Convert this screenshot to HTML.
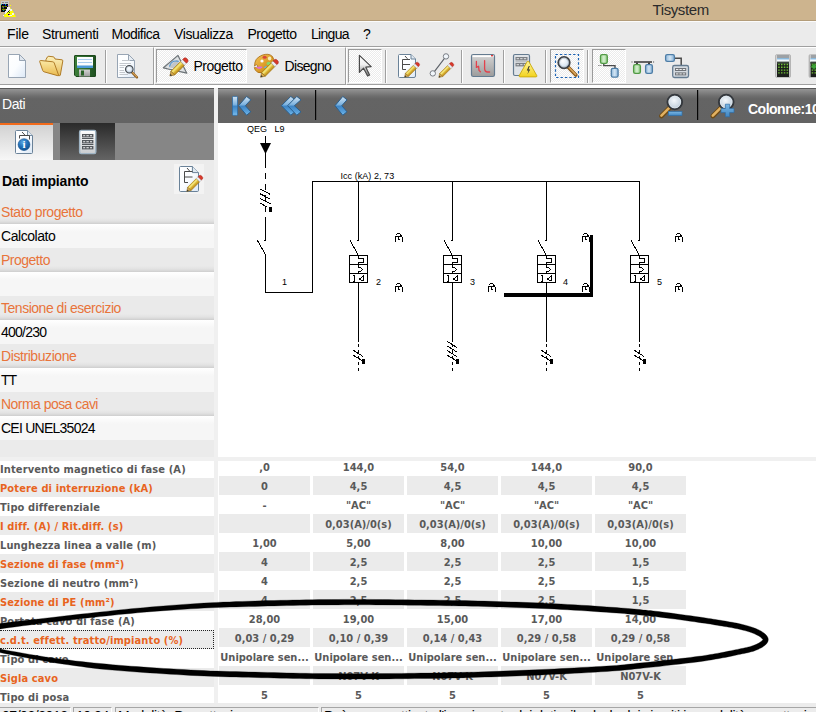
<!DOCTYPE html>
<html lang="it">
<head>
<meta charset="utf-8">
<title>Tisystem</title>
<style>
*{box-sizing:border-box;margin:0;padding:0}
html,body{width:816px;height:712px;overflow:hidden;background:#fff}
body{font-family:"Liberation Sans",sans-serif;font-size:14px;letter-spacing:-0.45px;color:#000;position:relative}
.abs{position:absolute}
#app{position:absolute;left:0;top:0;width:816px;height:712px;overflow:hidden;background:#fff}
/* title bar */
#title{left:0;top:0;width:816px;height:21px;background:#cdb48e;border-bottom:1px solid #b39c79}
#title .cap{left:652.5px;top:0px;letter-spacing:-0.4px;font-size:15px;line-height:19px;color:#2b2b2b;white-space:nowrap}
/* menu */
#menu{left:0;top:21px;width:816px;height:25px;background:#ebebeb;border-top:1px solid #fbfbfb}
#menu span{position:absolute;top:4px;line-height:16px;font-size:14px;white-space:nowrap;color:#000}
/* toolbar */
#tb{left:0;top:46px;width:816px;height:42px;background:#ebebeb;border-top:1px solid #a0a0a0}
#tb .band{position:absolute;top:0;height:38px;border-top:1px solid #fff;border-left:1px solid #fff;border-right:1px solid #a0a0a0;border-bottom:1px solid #a0a0a0}
#tb .under{position:absolute;left:0;top:38px;width:816px;height:3px;background:#fff}
.sep{position:absolute;width:2px;height:33px;border-left:1px solid #a0a0a0;border-right:1px solid #fff}
.btnp{position:absolute;border:1px solid #fff;border-top-color:#9a9a9a;border-left-color:#9a9a9a;background:#f5f5f5 conic-gradient(#ffffff 25%,#ebebeb 0 50%,#ffffff 0 75%,#ebebeb 0) 0 0/2px 2px}
.tbl{position:absolute;font-size:14px;line-height:16px;white-space:nowrap}
/* left panel */
#lhead{left:0;top:88px;width:214px;height:35px;background:linear-gradient(#585858 0,#5a5a5a 1px,#939393 1.2px,#8a8a8a 3px,#6e6e6e 8px,#646464 11px,#636363 100%)}
#lhead span{position:absolute;left:2px;top:8px;font-size:14px;line-height:16px;color:#fff}
#tabs{left:0;top:123px;width:214px;height:37px;background:#868686}
#tab1{left:0;top:0;width:53px;height:37px;background:linear-gradient(#d2d2d2,#f7f7f7);border-top:2px solid #f26a1b}
#tab2{left:60px;top:0;width:55px;height:37px;background:linear-gradient(#2a2a2a,#646464)}
#lbody{left:0;top:160px;width:214px;height:297px;background:#ebebeb}
.lab{position:absolute;left:0;width:214px;height:24px;background:linear-gradient(#eaeaea 0,#eaeaea 18px,#e2e2e2 21px,#d6d6d6 23px,#cdcdcd 24px);color:#e8743b;font-size:14px;line-height:25px;padding-left:1px;white-space:nowrap}
.val{position:absolute;left:0;width:214px;height:24px;background:linear-gradient(#fff 0,#fdfdfd 2px,#f6f6f6 8px,#f6f6f6 100%);color:#000;font-size:14px;line-height:25px;padding-left:1px;white-space:nowrap}
/* splitters */
#vsplit{left:214px;top:88px;width:4px;height:616px;background:#f0f0f0}
#hsplit{left:0;top:457px;width:816px;height:4px;background:#f0f0f0}
/* right panel */
#rhead{left:218px;top:88px;width:598px;height:35px;background:linear-gradient(#585858 0,#5a5a5a 1px,#939393 1.2px,#8a8a8a 3px,#6e6e6e 8px,#646464 11px,#636363 100%)}
#diagram{left:218px;top:123px;width:598px;height:334px;background:#fff}
/* table */
.t{font-family:"DejaVu Sans Condensed","DejaVu Sans","Liberation Sans",sans-serif;font-weight:bold;font-size:11px}
.lr{position:absolute;left:0;width:214px;height:19px;line-height:21px;white-space:nowrap;color:#595959;letter-spacing:0.12px}
.lr.g{background:#ebebeb;color:#e8641e}
.c{position:absolute;width:91px;height:19px;line-height:22px;text-align:center;white-space:nowrap;color:#595959;overflow:hidden;letter-spacing:0}
.c.g{background:#ebebeb}
/* status */
#status{left:0;top:703px;width:816px;height:9px;background:#ececec}
#status div{position:absolute;top:4px;height:20px;border:1px solid #fff;border-top-color:#a6a6a6;border-left-color:#a6a6a6;font-size:14px;line-height:16px;padding-left:2px;white-space:nowrap;overflow:hidden}
.lr.foc{border-top:1px dotted #222;border-bottom:1px dotted #222;border-right:1px dotted #222;line-height:19px}

</style>
</head>
<body>
<div id="app">
<!--TITLE-->
<div id="title" class="abs"><div class="cap abs">Tisystem</div></div>
<svg class="abs" style="left:0;top:0" width="20" height="20" viewBox="0 0 20 20" shape-rendering="crispEdges">
<rect x="1" y="1" width="8" height="4" fill="#c8c8c8"/><path d="M2 2h2v1h-2zM5 2h3v1h-3z" fill="#8a8a8a"/>
<rect x="1" y="4" width="7" height="8" fill="#0a0a0a"/>
<path d="M1 4h1v1h-1zM5 4h1v1h-1z" fill="#00b4b4"/><path d="M3 4h1v1h-1zM5 5h1v1h-1zM7 5h1v1h-1z" fill="#0000c8"/>
<path d="M2 6h5v1h-5zM2 9h4v1h-4z" fill="#808000"/><path d="M2 7h1v1h-1zM3 8h1v1h-1zM4 6h1v1h-1z" fill="#008000"/><path d="M3 7h1v1h-1z" fill="#b000b0"/><path d="M3 10h1v1h-1z" fill="#009090"/>
<path d="M10 5h1v1h-1zM9 7l-6 10h13l-4-8z" fill="#ffff00" shape-rendering="auto"/>
<path d="M7 7h3v2h-3zM6 9h4v2h-4zM5 11h3v2h-3zM10 9h2v2h-2zM5 12h1v2h-1zM12 13h2v2h-2zM3 15h1v1h-1zM9 15h3v1h-3z" fill="#f0f0f4"/>
<path d="M11 8h1v1h-1zM13 10h1v1h-1zM14 12h1v1h-1zM4 13h1v1h-1zM3 16h1v1h-1z" fill="#a8a8c0"/>
<path d="M8 11h1v1h-1zM8 14h1v1h-1z" fill="#0a0a0a"/><path d="M9 12h1v1h-1z" fill="#008000"/><path d="M9 14h1v1h-1z" fill="#a000a0"/><path d="M7 12h1v1h-1zM9 10h1v1h-1z" fill="#808000"/>
</svg>
<!--MENU-->
<div id="menu" class="abs">
<span style="left:7px;letter-spacing:-0.17px">File</span><span style="left:42px;letter-spacing:-0.38px">Strumenti</span><span style="left:111.5px;letter-spacing:-0.5px">Modifica</span><span style="left:174px;letter-spacing:-0.39px">Visualizza</span><span style="left:247.5px;letter-spacing:-0.5px">Progetto</span><span style="left:311px;letter-spacing:-0.7px">Lingua</span><span style="left:363px;letter-spacing:0px">?</span>
</div>
<div id="tb" class="abs">
<div class="band" style="left:0;width:154px;border-left:0"></div>
<div class="band" style="left:154px;width:192px"></div>
<div class="band" style="left:346px;width:470px;border-right:0"></div>
<div class="under"></div>
</div>
<div class="btnp" style="left:156px;top:49px;width:91px;height:34px"></div>
<div class="btnp" style="left:348px;top:49px;width:34px;height:34px"></div>
<div class="btnp" style="left:550px;top:49px;width:34px;height:34px"></div>
<div class="btnp" style="left:592px;top:49px;width:34px;height:34px"></div>
<div class="sep" style="left:105px;top:50px"></div>
<div class="sep" style="left:385px;top:50px"></div>
<div class="sep" style="left:461px;top:50px"></div>
<div class="sep" style="left:503px;top:50px"></div>
<div class="sep" style="left:545px;top:50px"></div>
<div class="sep" style="left:587px;top:50px"></div>
<div class="tbl" style="left:193.5px;top:58px;letter-spacing:-0.5px">Progetto</div>
<div class="tbl" style="left:284.5px;top:58px;letter-spacing:-0.67px">Disegno</div>
<svg class="abs" style="left:0;top:46px" width="816" height="42" viewBox="0 46 816 42">
<defs>
<linearGradient id="gPage" x1="0" y1="0" x2="1" y2="1"><stop offset="0" stop-color="#ffffff"/><stop offset="0.5" stop-color="#fbfdff"/><stop offset="1" stop-color="#dce8f6"/></linearGradient>
<linearGradient id="gFold" x1="0" y1="0" x2="0" y2="1"><stop offset="0" stop-color="#fbe9a6"/><stop offset="1" stop-color="#e9b94e"/></linearGradient>
<linearGradient id="gFoldB" x1="0" y1="0" x2="0" y2="1"><stop offset="0" stop-color="#fdf2bd"/><stop offset="1" stop-color="#e6bb58"/></linearGradient>
<linearGradient id="gPen" x1="0" y1="0" x2="0" y2="1"><stop offset="0" stop-color="#e6cc48"/><stop offset="0.3" stop-color="#f4e680"/><stop offset="0.6" stop-color="#dcb634"/><stop offset="1" stop-color="#b8861c"/></linearGradient>
<linearGradient id="gGray" x1="0" y1="0" x2="0" y2="1"><stop offset="0" stop-color="#d4d4d4"/><stop offset="1" stop-color="#9c9c9c"/></linearGradient>
<linearGradient id="gCur" x1="0" y1="0" x2="0" y2="1"><stop offset="0" stop-color="#ffffff"/><stop offset="0.45" stop-color="#f0f0f0"/><stop offset="1" stop-color="#7a7a7a"/></linearGradient>
<linearGradient id="gGreen" x1="0" y1="0" x2="1" y2="0"><stop offset="0" stop-color="#93d088"/><stop offset="0.5" stop-color="#d8f0d2"/><stop offset="1" stop-color="#8aca7e"/></linearGradient>
<linearGradient id="gBlue" x1="0" y1="0" x2="1" y2="0"><stop offset="0" stop-color="#90b8db"/><stop offset="0.5" stop-color="#d2e5f4"/><stop offset="1" stop-color="#86b0d6"/></linearGradient>
<linearGradient id="gWarn" x1="0" y1="0" x2="0" y2="1"><stop offset="0" stop-color="#fff59a"/><stop offset="1" stop-color="#f2d21c"/></linearGradient>
<radialGradient id="gLens" cx="0.4" cy="0.35" r="0.7"><stop offset="0" stop-color="#ffffff"/><stop offset="0.6" stop-color="#dfeaf5"/><stop offset="1" stop-color="#b4c8dc"/></radialGradient>
<linearGradient id="gPal" x1="0" y1="0" x2="1" y2="1"><stop offset="0" stop-color="#f3c55a"/><stop offset="0.5" stop-color="#dfa02c"/><stop offset="1" stop-color="#b87613"/></linearGradient>
<linearGradient id="gCalc" x1="0" y1="0" x2="1" y2="0"><stop offset="0" stop-color="#9a9a9a"/><stop offset="0.12" stop-color="#ffffff"/><stop offset="0.88" stop-color="#f4f4f4"/><stop offset="1" stop-color="#8a8a8a"/></linearGradient>
<linearGradient id="gFl" x1="0" y1="0" x2="1" y2="0"><stop offset="0" stop-color="#3d7f3a"/><stop offset="0.5" stop-color="#2f6d2e"/><stop offset="1" stop-color="#1f4f20"/></linearGradient>


</defs>
<path d="M8.5 54.5H19.5L25.5 60.5V77.5H8.5Z" fill="url(#gPage)" stroke="#98a5b4" stroke-width="1"/>
<path d="M19.5 54.5V60.5H25.5Z" fill="#dfe6ee" stroke="#98a5b4" stroke-width="1" stroke-linejoin="round"/>
<path d="M46 59.5L47.5 56.8Q48 56.2 49 56.3L53.2 56.8Q54.2 57 54.6 58L55 59L62 59.8Q63 60 62.8 61L60.3 75.2Q60 76 59 75.6L45 71Z" fill="url(#gFoldB)" stroke="#b07c28" stroke-width="1" stroke-linejoin="round"/>
<path d="M39.7 61.6Q39.5 60.5 40.6 60.5L52.8 61.8Q53.8 61.9 54.2 62.9L58.6 75.2Q58.8 76 57.8 75.7L44 71.8Q43 71.5 42.7 70.5Z" fill="url(#gFold)" stroke="#b07c28" stroke-width="1" stroke-linejoin="round"/>
<path d="M74.5 56Q74.5 55.5 75 55.5H95Q95.5 55.5 95.5 56V76Q95.5 76.5 95 76.5H76L74.5 75Z" fill="url(#gFl)" stroke="#1d4a1d" stroke-width="1"/>
<rect x="77" y="57" width="16" height="11" fill="#fbfdff"/>
<rect x="77" y="65.5" width="16" height="2.5" fill="#4d9ad8"/>
<path d="M78 59.5H92M78 62.5H92" stroke="#a9cdee" stroke-width="1"/>
<rect x="79" y="69.5" width="11" height="7" fill="url(#gGray)"/>
<rect x="81" y="70.5" width="3" height="5" fill="#2a6428"/>
<path d="M117.5 54.5H128.5L134.5 60.5V77.5H117.5Z" fill="url(#gPage)" stroke="#98a5b4" stroke-width="1"/>
<path d="M128.5 54.5V60.5H134.5Z" fill="#e7edf3" stroke="#98a5b4" stroke-width="1" stroke-linejoin="round"/>
<path d="M122 60.5H130M119.5 63.5H131M119.5 65.5H126M119.5 67.5H124M119.5 70.5H124M119.5 72.5H125M119.5 74.5H128" stroke="#c4c8cd" stroke-width="1"/>
<g transform="translate(129.3 69.3) scale(0.66)">
 <path d="M4.2 4.6L11.6 12.2" stroke="#8a5a1c" stroke-width="3.6" stroke-linecap="round" fill="none"/>
 <path d="M4.6 4.6L11.4 11.6" stroke="#d9a45a" stroke-width="1.6" stroke-linecap="round" fill="none"/>
 <circle cx="0" cy="0" r="5.6" fill="url(#gLens)" stroke="#3f4348" stroke-width="1.9"/>
 <circle cx="0" cy="0" r="4.4" fill="none" stroke="#aeb9c4" stroke-width="0.8"/>
</g>
<path d="M163.4 67.8L178 55.4L186.8 73.2Z" fill="#d9dcde" stroke="#6d7478" stroke-width="1.2" stroke-linejoin="round"/>
<path d="M167 67.6L177.4 58.6L182.6 70.4Z" fill="#c1c5c8" stroke="#eef0f1" stroke-width="0.8"/>
<path d="M169.5 66.5Q171.5 59.5 178.8 61.4" fill="none" stroke="#4f93cf" stroke-width="1.1"/>
<g transform="translate(169.9 76) scale(1.02)"><g transform="rotate(-45)">
 <path d="M4 -2.6H17.6V2.6H4Z" fill="url(#gPen)" stroke="#a8780e" stroke-width="0.7"/>
 <path d="M0 0L4 -2.6V2.6Z" fill="#d8aa4a" stroke="#8c6a22" stroke-width="0.6" stroke-linejoin="round"/>
 <path d="M0 0L1.9 -1.25V1.25Z" fill="#3c3c3c"/>
 <path d="M17.6 -2.6H20.4V2.6H17.6Z" fill="#eceef2" stroke="#a4a8b0" stroke-width="0.5"/>
 <path d="M20.4 -2.6H22.2Q23.8 -2.4 23.8 0Q23.8 2.4 22.2 2.6H20.4Z" fill="#d8382a" stroke="#a3261c" stroke-width="0.5"/>
</g></g>
<path d="M254.6 66.2Q254.2 58.2 262 55.2Q268.6 52.8 272.4 56.4Q275 59.4 272.8 63.6Q270.6 67.6 267 70.8Q262.4 74 258 72.4Q254.6 70.6 254.3 67.6Q256.6 68.2 257.6 66.9Q258.2 65.6 256.8 64.8Q255.2 64.6 254.6 66.2Z" fill="url(#gPal)" stroke="#a86a10" stroke-width="0.8"/>
<ellipse cx="264.6" cy="57.3" rx="2" ry="1.5" fill="#d8453a"/>
<ellipse cx="269.6" cy="58.4" rx="1.7" ry="2" fill="#f6e9b0"/>
<ellipse cx="262" cy="61" rx="1.6" ry="1.5" fill="#fafafa"/>
<ellipse cx="268.6" cy="63.4" rx="2" ry="1.6" fill="#86d66c"/>
<path d="M256.6 67.4Q259.4 69.8 262.2 67.2Q260 66.6 258.6 67.2Z" fill="#e06ad8" stroke="#e06ad8" stroke-width="1"/>
<path d="M263.6 67.6L267 65.4L266 68.4Z" fill="#58b4ea"/>
<g transform="translate(260.6 77.2) scale(1.0)"><g transform="rotate(-45)">
 <path d="M4 -2.6H17.6V2.6H4Z" fill="url(#gPen)" stroke="#a8780e" stroke-width="0.7"/>
 <path d="M0 0L4 -2.6V2.6Z" fill="#d8aa4a" stroke="#8c6a22" stroke-width="0.6" stroke-linejoin="round"/>
 <path d="M0 0L1.9 -1.25V1.25Z" fill="#3c3c3c"/>
 <path d="M17.6 -2.6H20.4V2.6H17.6Z" fill="#eceef2" stroke="#a4a8b0" stroke-width="0.5"/>
 <path d="M20.4 -2.6H22.2Q23.8 -2.4 23.8 0Q23.8 2.4 22.2 2.6H20.4Z" fill="#d8382a" stroke="#a3261c" stroke-width="0.5"/>
</g></g>
<path d="M359.4 55.4V72.4L363.6 68.2L367.6 76L369.6 75L365.8 67.2L371.2 66.6Z" fill="url(#gCur)" stroke="#4a4a4a" stroke-width="1.2" stroke-linejoin="round"/>
<path d="M399.5 54.5H411L415.5 59V76Q415.5 77.5 414 77.5H399.5Q398.5 77.5 398.5 76.5V55.5Q398.5 54.5 399.5 54.5Z" fill="url(#gPage)" stroke="#6a8298" stroke-width="1"/>
<path d="M411 54.5V59H415.5" fill="#dfe8f1" stroke="#6a8298" stroke-width="1"/>
<path d="M402.5 69.5V59.5H410M402.5 64.5H410M402.5 69.5H406M405 56L407.5 58.8" fill="none" stroke="#4a4a4a" stroke-width="1"/>
<g transform="translate(404.6 77.2) scale(0.84)"><g transform="rotate(-45)">
 <path d="M4 -2.6H17.6V2.6H4Z" fill="url(#gPen)" stroke="#a8780e" stroke-width="0.7"/>
 <path d="M0 0L4 -2.6V2.6Z" fill="#d8aa4a" stroke="#8c6a22" stroke-width="0.6" stroke-linejoin="round"/>
 <path d="M0 0L1.9 -1.25V1.25Z" fill="#3c3c3c"/>
 <path d="M17.6 -2.6H20.4V2.6H17.6Z" fill="#eceef2" stroke="#a4a8b0" stroke-width="0.5"/>
 <path d="M20.4 -2.6H22.2Q23.8 -2.4 23.8 0Q23.8 2.4 22.2 2.6H20.4Z" fill="#d8382a" stroke="#a3261c" stroke-width="0.5"/>
</g></g>
<path d="M433 73.4L446 56.4" stroke="#5a5f66" stroke-width="1.1"/>
<circle cx="446" cy="56.4" r="2.7" fill="#f1f6fb" stroke="#6c7178" stroke-width="0.9"/>
<circle cx="432.8" cy="73.4" r="2.7" fill="#f1f6fb" stroke="#6c7178" stroke-width="0.9"/>
<g transform="translate(438.8 77.4) scale(0.84)"><g transform="rotate(-45)">
 <path d="M4 -2.6H17.6V2.6H4Z" fill="url(#gPen)" stroke="#a8780e" stroke-width="0.7"/>
 <path d="M0 0L4 -2.6V2.6Z" fill="#d8aa4a" stroke="#8c6a22" stroke-width="0.6" stroke-linejoin="round"/>
 <path d="M0 0L1.9 -1.25V1.25Z" fill="#3c3c3c"/>
 <path d="M17.6 -2.6H20.4V2.6H17.6Z" fill="#eceef2" stroke="#a4a8b0" stroke-width="0.5"/>
 <path d="M20.4 -2.6H22.2Q23.8 -2.4 23.8 0Q23.8 2.4 22.2 2.6H20.4Z" fill="#d8382a" stroke="#a3261c" stroke-width="0.5"/>
</g></g>
<rect x="471.5" y="54.5" width="23" height="22" rx="1.8" fill="url(#gGray)" stroke="#647b90" stroke-width="1.2"/>
<rect x="472.5" y="55.3" width="21" height="1.8" fill="#fdfdfd"/>
<rect x="491" y="55" width="2" height="1.4" fill="#e03c3c"/>
<path d="M476.4 61.4V67.4L478.6 66.2L479 70.4L480.4 71.8M484.6 60.6V68.6Q484.8 72 487.6 72H489.6" fill="none" stroke="#e2414c" stroke-width="1.3" stroke-linecap="round" stroke-linejoin="round"/>
<rect x="513.5" y="54.5" width="16" height="21" rx="1.5" fill="#dfe3e7" stroke="#647b90" stroke-width="1.2"/>
<rect x="515.5" y="57" width="12" height="3.4" fill="#7b7f84"/><rect x="515.5" y="63" width="12" height="3.4" fill="#7b7f84"/>
<path d="M516.6 58.7h2.4m1.2 0h2.4m1.2 0h2.4M516.6 64.7h2.4m1.2 0h2.4m1.2 0h2.4" stroke="#e6e6e6" stroke-width="1"/>
<path d="M515.5 61.8H527.5" stroke="#8d9196" stroke-width="0.6"/>
<path d="M527.2 61.6Q528 60.6 528.8 61.6L536.8 75.6Q537.2 76.8 536 76.9H520Q518.8 76.8 519.2 75.6Z" fill="url(#gWarn)" stroke="#c9a80c" stroke-width="0.9" stroke-linejoin="round"/>
<path d="M528.8 66L526.8 70.4H528.6L527.4 74.2L530.2 69.4H528.4L529.8 66Z" fill="#2c2c2c"/>
<rect x="555.5" y="54.5" width="23" height="23" fill="none" stroke="#1d63b3" stroke-width="1.2" stroke-dasharray="2.4 2"/>
<g transform="translate(564 62.6) scale(1.02)">
 <path d="M4.2 4.6L11.6 12.2" stroke="#8a5a1c" stroke-width="3.6" stroke-linecap="round" fill="none"/>
 <path d="M4.6 4.6L11.4 11.6" stroke="#d9a45a" stroke-width="1.6" stroke-linecap="round" fill="none"/>
 <circle cx="0" cy="0" r="5.6" fill="url(#gLens)" stroke="#3f4348" stroke-width="1.9"/>
 <circle cx="0" cy="0" r="4.4" fill="none" stroke="#aeb9c4" stroke-width="0.8"/>
</g>
<path d="M598.4 65.5h1m1 0h1" stroke="#555" stroke-width="1"/>
<path d="M603.8 63.5V65.6H615V68" fill="none" stroke="#4a4a4a" stroke-width="1.4"/>
<rect x="600.5" y="54.6" width="6.8" height="8.8" rx="1.6" fill="url(#gGreen)" stroke="#519a44" stroke-width="1.3"/>
<rect x="611.3" y="68.3" width="6.8" height="8.8" rx="1.6" fill="url(#gBlue)" stroke="#4d7da6" stroke-width="1.3"/>
<path d="M632 61.3v1.4M653.6 61.3v1.4" stroke="#555" stroke-width="0.8"/>
<path d="M634 62H652" stroke="#3f3f3f" stroke-width="1.6"/>
<path d="M637 62.5V64.5M649 62.5V64.5" stroke="#3f3f3f" stroke-width="2"/>
<rect x="633.6" y="64.6" width="6.8" height="8.8" rx="1.6" fill="url(#gGreen)" stroke="#519a44" stroke-width="1.3"/>
<rect x="645.6" y="64.6" width="6.8" height="8.8" rx="1.6" fill="url(#gBlue)" stroke="#4d7da6" stroke-width="1.3"/>
<path d="M675 58.2H681.2V65.4" fill="none" stroke="#4a4a4a" stroke-width="1.5"/>
<rect x="665.6" y="54.6" width="8.8" height="6.8" rx="1.6" fill="url(#gBlue)" stroke="#4d7da6" stroke-width="1.3"/>
<rect x="672.7" y="65.5" width="15.8" height="12" rx="1.8" fill="#d5dbe1" stroke="#647b90" stroke-width="1.3"/>
<rect x="675" y="68" width="11.2" height="3" fill="#6f7378"/><rect x="675" y="72.4" width="11.2" height="3" fill="#6f7378"/>
<path d="M676 69.5h2.4m1 0h2.4m1 0h2.4M676 73.9h2.4m1 0h2.4m1 0h2.4" stroke="#ededed" stroke-width="1"/>
<rect x="775.5" y="54.5" width="15" height="23" rx="1.5" fill="url(#gCalc)" stroke="#b4b4b4" stroke-width="0.8"/>
<rect x="777" y="55" width="12" height="3.4" fill="#9da1a5"/>
<rect x="777" y="58.4" width="12" height="1.2" fill="#5aa5dc"/>
<rect x="777" y="59.6" width="12" height="2.2" fill="#f4f9fd"/>
<rect x="777" y="61.8" width="12" height="15.2" fill="#1c1f1c"/>
<rect x="777" y="61.8" width="12" height="2" fill="#3b453b"/>
<path d="M778.2 63.8h1.5v1.4h-1.5zM781.0 63.8h1.5v1.4h-1.5zM783.8000000000001 63.8h1.5v1.4h-1.5zM786.6 63.8h1.5v1.4h-1.5zM778.2 66.6h1.5v1.4h-1.5zM781.0 66.6h1.5v1.4h-1.5zM783.8000000000001 66.6h1.5v1.4h-1.5zM786.6 66.6h1.5v1.4h-1.5zM778.2 69.39999999999999h1.5v1.4h-1.5zM781.0 69.39999999999999h1.5v1.4h-1.5zM783.8000000000001 69.39999999999999h1.5v1.4h-1.5zM786.6 69.39999999999999h1.5v1.4h-1.5zM778.2 72.19999999999999h1.5v1.4h-1.5zM781.0 72.19999999999999h1.5v1.4h-1.5zM783.8000000000001 72.19999999999999h1.5v1.4h-1.5zM786.6 72.19999999999999h1.5v1.4h-1.5z" fill="#6fbf35"/>
<rect x="809.0" y="54.5" width="15" height="23" rx="1.5" fill="url(#gCalc)" stroke="#b4b4b4" stroke-width="0.8"/>
<rect x="810.5" y="55" width="12" height="3.4" fill="#9da1a5"/>
<rect x="810.5" y="58.4" width="12" height="1.2" fill="#5aa5dc"/>
<rect x="810.5" y="59.6" width="12" height="2.2" fill="#f4f9fd"/>
<rect x="810.5" y="61.8" width="12" height="15.2" fill="#1c1f1c"/>
<rect x="810.5" y="61.8" width="12" height="2" fill="#3b453b"/>
<path d="M811.7 63.8h1.5v1.4h-1.5zM814.5 63.8h1.5v1.4h-1.5zM817.3000000000001 63.8h1.5v1.4h-1.5zM820.1 63.8h1.5v1.4h-1.5zM811.7 66.6h1.5v1.4h-1.5zM814.5 66.6h1.5v1.4h-1.5zM817.3000000000001 66.6h1.5v1.4h-1.5zM820.1 66.6h1.5v1.4h-1.5zM811.7 69.39999999999999h1.5v1.4h-1.5zM814.5 69.39999999999999h1.5v1.4h-1.5zM817.3000000000001 69.39999999999999h1.5v1.4h-1.5zM820.1 69.39999999999999h1.5v1.4h-1.5zM811.7 72.19999999999999h1.5v1.4h-1.5zM814.5 72.19999999999999h1.5v1.4h-1.5zM817.3000000000001 72.19999999999999h1.5v1.4h-1.5zM820.1 72.19999999999999h1.5v1.4h-1.5z" fill="#6fbf35"/>
<path d="M811 66.5L814 63.5L817 66.5L814 69.5Z" fill="#3ea338" stroke="#2b7a27" stroke-width="0.8"/>
</svg>
<!--LEFT-->
<div id="lhead" class="abs"><span>Dati</span></div>
<div id="tabs" class="abs"><div id="tab1" class="abs"></div><div id="tab2" class="abs"></div></div>
<div id="lbody" class="abs"></div>
<div class="lab" style="top:200px;letter-spacing:-0.46px">Stato progetto</div>
<div class="val" style="top:224px;letter-spacing:-0.44px">Calcolato</div>
<div class="lab" style="top:248px;letter-spacing:-0.5px">Progetto</div>
<div class="val" style="top:272px;letter-spacing:-0.45px"></div>
<div class="lab" style="top:296px;letter-spacing:-0.48px">Tensione di esercizio</div>
<div class="val" style="top:320px;letter-spacing:-0.75px">400/230</div>
<div class="lab" style="top:344px;letter-spacing:-0.42px">Distribuzione</div>
<div class="val" style="top:368px;letter-spacing:-1px">TT</div>
<div class="lab" style="top:392px;letter-spacing:-0.54px">Norma posa cavi</div>
<div class="val" style="top:416px;letter-spacing:-0.75px">CEI UNEL35024</div>
<div class="abs" style="left:2px;top:171.5px;font-weight:bold;font-size:14px;line-height:18px;white-space:nowrap;letter-spacing:-0.17px">Dati impianto</div>
<div class="abs" style="left:174px;top:164px;width:30px;height:30px;background:#f3f3f3"></div>
<svg class="abs" style="left:0;top:123px" width="214" height="75" viewBox="0 123 214 75">
<defs>
<linearGradient id="lPage" x1="0" y1="0" x2="1" y2="1"><stop offset="0" stop-color="#ffffff"/><stop offset="0.5" stop-color="#fafcff"/><stop offset="1" stop-color="#dbe8f6"/></linearGradient>
<radialGradient id="lInfo" cx="0.4" cy="0.3" r="0.8"><stop offset="0" stop-color="#5aa5e0"/><stop offset="0.5" stop-color="#1f6fb8"/><stop offset="1" stop-color="#0d4a86"/></radialGradient>
<linearGradient id="lSrv" x1="0" y1="0" x2="0" y2="1"><stop offset="0" stop-color="#ffffff"/><stop offset="1" stop-color="#c9cccf"/></linearGradient>
<linearGradient id="lPen" x1="0" y1="0" x2="0" y2="1"><stop offset="0" stop-color="#e6cc48"/><stop offset="0.3" stop-color="#f4e680"/><stop offset="0.6" stop-color="#dcb634"/><stop offset="1" stop-color="#b8861c"/></linearGradient>

</defs>
<path d="M16.5 130.5H27.5L32.5 135.5V152.5Q32.5 153.5 31.5 153.5H16.5Q15.5 153.5 15.5 152.5V131.5Q15.5 130.5 16.5 130.5Z" fill="url(#lPage)" stroke="#6a8298" stroke-width="1"/>
<path d="M27.5 130.5V135.5H32.5" fill="#e4ebf3" stroke="#6a8298" stroke-width="0.9"/>
<path d="M19.5 138.5V135.5H29.5V139.5M22 132L25 135.2" fill="none" stroke="#4a4a4a" stroke-width="1"/>
<circle cx="24" cy="144.6" r="5.9" fill="url(#lInfo)" stroke="#0d4a86" stroke-width="0.6"/>
<text x="24.1" y="148.4" font-family="Liberation Serif, serif" font-weight="bold" font-size="11px" fill="#fff" text-anchor="middle" style="letter-spacing:0">i</text>
<rect x="79.6" y="130.4" width="16.2" height="23.2" rx="1.6" fill="url(#lSrv)" stroke="#9fb4c4" stroke-width="1.4"/>
<rect x="82" y="134" width="11.4" height="3.4" fill="#55595d"/>
<path d="M83.2 135.7h2m1.2 0h2.4m1.2 0h2" stroke="#f4f4f4" stroke-width="1.1"/>
<rect x="82" y="140" width="11.4" height="3.4" fill="#55595d"/>
<path d="M83.2 141.7h2m1.2 0h2.4m1.2 0h2" stroke="#f4f4f4" stroke-width="1.1"/>
<rect x="82" y="146" width="11.4" height="3.4" fill="#55595d"/>
<path d="M83.2 147.7h2m1.2 0h2.4m1.2 0h2" stroke="#f4f4f4" stroke-width="1.1"/>
<path d="M82 138.5h11.4M82 144.5h11.4" stroke="#44484c" stroke-width="0.9"/>
<path d="M180.6 166.5H192.4L198.5 172.6V190.4Q198.5 191.5 197.4 191.5H180.6Q179.5 191.5 179.5 190.4V167.6Q179.5 166.5 180.6 166.5Z" fill="url(#lPage)" stroke="#6a8298" stroke-width="1"/>
<path d="M192.4 166.5V172.6H198.5" fill="#dfe8f1" stroke="#6a8298" stroke-width="1"/>
<path d="M184.5 182.5V171.5H192.5M184.5 177H192.5M184.5 182.5H188M187 168L189.6 171" fill="none" stroke="#4a4a4a" stroke-width="1"/>
<g transform="translate(186.8 191.4) scale(0.9)"><g transform="rotate(-45)">
 <path d="M4 -2.6H17.6V2.6H4Z" fill="url(#lPen)" stroke="#a8780e" stroke-width="0.7"/>
 <path d="M0 0L4 -2.6V2.6Z" fill="#d8aa4a" stroke="#8c6a22" stroke-width="0.6" stroke-linejoin="round"/>
 <path d="M0 0L1.9 -1.25V1.25Z" fill="#3c3c3c"/>
 <path d="M17.6 -2.6H20.4V2.6H17.6Z" fill="#eceef2" stroke="#a4a8b0" stroke-width="0.5"/>
 <path d="M20.4 -2.6H22.2Q23.8 -2.4 23.8 0Q23.8 2.4 22.2 2.6H20.4Z" fill="#d8382a" stroke="#a3261c" stroke-width="0.5"/>
</g></g>
</svg>
<!--RIGHT-->
<div id="rhead" class="abs"></div>
<svg class="abs" style="left:218px;top:88px" width="598" height="35" viewBox="218 88 598 35">
<defs>
<linearGradient id="hChev" gradientUnits="userSpaceOnUse" x1="0" y1="96" x2="0" y2="116"><stop offset="0" stop-color="#d6e6f3"/><stop offset="0.42" stop-color="#7fb4e0"/><stop offset="0.52" stop-color="#3f86c6"/><stop offset="0.8" stop-color="#5aa2dc"/><stop offset="1" stop-color="#86c4f0"/></linearGradient>
<radialGradient id="hLens" cx="0.45" cy="0.4" r="0.7"><stop offset="0" stop-color="#f4f8fb"/><stop offset="0.6" stop-color="#ccd8e2"/><stop offset="1" stop-color="#93a7b8"/></radialGradient>
<linearGradient id="hBlue" x1="0" y1="0" x2="0" y2="1"><stop offset="0" stop-color="#7bb6e2"/><stop offset="1" stop-color="#3f86c3"/></linearGradient>

</defs>
<rect x="232.5" y="96.4" width="5" height="19" rx="0.8" fill="url(#hChev)" stroke="#2f6fa8" stroke-width="0.8"/>
<path d="M238.6 105.7L246.6 96.4L250.79999999999998 99.80000000000001L245.39999999999998 105.7L250.79999999999998 111.8L246.6 115.2Z" fill="url(#hChev)" stroke="#2a5f8e" stroke-width="1" stroke-linejoin="round"/>
<path d="M281.4 105.7L290.8 96.4L295.0 99.80000000000001L288.2 105.7L295.0 111.8L290.8 115.2Z" fill="url(#hChev)" stroke="#2a5f8e" stroke-width="1" stroke-linejoin="round"/>
<path d="M287.6 105.7L296.8 96.4L301.0 99.80000000000001L294.40000000000003 105.7L301.0 111.8L296.8 115.2Z" fill="url(#hChev)" stroke="#2a5f8e" stroke-width="1" stroke-linejoin="round"/>
<path d="M335 105.7L342.8 96.4L347 99.80000000000001L341.8 105.7L347 111.8L342.8 115.2Z" fill="url(#hChev)" stroke="#2a5f8e" stroke-width="1" stroke-linejoin="round"/>
<rect x="265" y="90" width="1.2" height="30" fill="#050505"/>
<rect x="315" y="90" width="1.2" height="30" fill="#050505"/>
<rect x="697" y="90" width="1.2" height="30" fill="#050505"/>
<g transform="translate(674.8 102)">
 <path d="M-5.4 6L-13.4 14" stroke="#6e4a14" stroke-width="4.6" stroke-linecap="round" fill="none"/>
 <path d="M-5.6 5.8L-13.4 13.6" stroke="#e2b162" stroke-width="2.6" stroke-linecap="round" fill="none"/>
 <circle cx="0" cy="0" r="7.3" fill="url(#hLens)" stroke="#34383d" stroke-width="2"/>
 <circle cx="0" cy="0" r="5.9" fill="none" stroke="#e8eef3" stroke-width="0.8" opacity="0.8"/>
</g>
<rect x="668.4" y="111.6" width="13.6" height="4" fill="url(#hBlue)" stroke="#2f6fa8" stroke-width="0.7"/>
<g transform="translate(726.2 102)">
 <path d="M-5.4 6L-13.4 14" stroke="#6e4a14" stroke-width="4.6" stroke-linecap="round" fill="none"/>
 <path d="M-5.6 5.8L-13.4 13.6" stroke="#e2b162" stroke-width="2.6" stroke-linecap="round" fill="none"/>
 <circle cx="0" cy="0" r="7.3" fill="url(#hLens)" stroke="#34383d" stroke-width="2"/>
 <circle cx="0" cy="0" r="5.9" fill="none" stroke="#e8eef3" stroke-width="0.8" opacity="0.8"/>
</g>
<path d="M725.4 104.2h4.2v4.2h4.4v4.2h-4.4v4.2h-4.2v-4.2h-4.4v-4.2h4.4z" fill="url(#hBlue)" stroke="#2f6fa8" stroke-width="0.7"/>
</svg>
<div class="abs" style="left:748px;top:100.5px;color:#fff;font-weight:bold;font-size:14px;line-height:16px;white-space:nowrap;letter-spacing:-0.5px">Colonne:10</div>
<div id="diagram" class="abs"></div>
<svg class="abs" style="left:0;top:0" width="816" height="712" viewBox="0 0 816 712">
<g fill="none" stroke="#000" stroke-width="1" shape-rendering="crispEdges">
<path d="M265.5 136V168"/>
<path d="M265.5 173V179"/>
<path d="M265.5 184V190"/>
<path d="M265.5 195V201"/>
<path d="M265.5 206V212"/>
<path d="M265.5 217V241"/>
<rect x="264" y="240" width="1" height="1" fill="#000" stroke="none"/>
<path d="M257.5 240.5L265.5 254.5" shape-rendering="crispEdges" stroke-width="1"/>
<path d="M265.5 254V293"/>
<path d="M265 292.5H313"/>
<path d="M312.5 181V293"/>
<path d="M260 189L270.5 194.5" shape-rendering="crispEdges" stroke-width="1"/>
<path d="M260 193.7L270.5 199.2" shape-rendering="crispEdges" stroke-width="1"/>
<path d="M260 198.4L270.5 203.9" shape-rendering="crispEdges" stroke-width="1"/>
<path d="M260 203L267 207" shape-rendering="crispEdges" stroke-width="1"/>
<rect x="269" y="207" width="3" height="5" fill="#000" stroke="none"/>
<path d="M312 181.5H640"/>
<path d="M358.5 181V241"/>
<rect x="357" y="240" width="1" height="1" fill="#000" stroke="none"/>
<path d="M350 240.5L358.5 255.5" shape-rendering="crispEdges" stroke-width="1"/>
<rect x="349.5" y="255.5" width="18" height="27"/>
<path d="M349 264.5H368"/>
<path d="M349 273.5H368"/>
<path d="M358.5 256V258.5H363.5V262.5H358.5V264"/>
<path d="M358.5 265V267.5H360.5L362.5 269.5L360.5 271.5H358.5V273" />
<path d="M354.5 275V282"/>
<rect x="353" y="275" width="1" height="1" fill="#000" stroke="none"/>
<rect x="353" y="281" width="1" height="1" fill="#000" stroke="none"/>
<path d="M363.5 275V281"/>
<rect x="359" y="278" width="2" height="2" fill="#000" stroke="none"/>
<rect x="361" y="277" width="1" height="1" fill="#000" stroke="none"/>
<rect x="361" y="280" width="2" height="1" fill="#000" stroke="none"/>
<rect x="362" y="276" width="1" height="1" fill="#000" stroke="none"/>
<path d="M358.5 282V342"/>
<path d="M358.5 344V347"/>
<path d="M358.5 350V353"/>
<path d="M358.5 356V359"/>
<path d="M358.5 362V365"/>
<path d="M358.5 368V371"/>
<path d="M353 350L363 356.5" shape-rendering="crispEdges" stroke-width="1"/>
<path d="M353 355L362 360.5" shape-rendering="crispEdges" stroke-width="1"/>
<rect x="362" y="359" width="3" height="5" fill="#000" stroke="none"/>
<path d="M452.5 181V241"/>
<rect x="451" y="240" width="1" height="1" fill="#000" stroke="none"/>
<path d="M444 240.5L452.5 255.5" shape-rendering="crispEdges" stroke-width="1"/>
<rect x="443.5" y="255.5" width="18" height="27"/>
<path d="M443 264.5H462"/>
<path d="M443 273.5H462"/>
<path d="M452.5 256V258.5H457.5V262.5H452.5V264"/>
<path d="M452.5 265V267.5H454.5L456.5 269.5L454.5 271.5H452.5V273" />
<path d="M448.5 275V282"/>
<rect x="447" y="275" width="1" height="1" fill="#000" stroke="none"/>
<rect x="447" y="281" width="1" height="1" fill="#000" stroke="none"/>
<path d="M457.5 275V281"/>
<rect x="453" y="278" width="2" height="2" fill="#000" stroke="none"/>
<rect x="455" y="277" width="1" height="1" fill="#000" stroke="none"/>
<rect x="455" y="280" width="2" height="1" fill="#000" stroke="none"/>
<rect x="456" y="276" width="1" height="1" fill="#000" stroke="none"/>
<path d="M452.5 282V342"/>
<path d="M452.5 344V347"/>
<path d="M452.5 350V353"/>
<path d="M452.5 356V359"/>
<path d="M452.5 362V365"/>
<path d="M452.5 368V371"/>
<path d="M447 341.2L457 347.5" shape-rendering="crispEdges" stroke-width="1"/>
<path d="M447 345.8L457 352.1" shape-rendering="crispEdges" stroke-width="1"/>
<path d="M447 350.4L457 356.7" shape-rendering="crispEdges" stroke-width="1"/>
<path d="M447 355L456 360.5" shape-rendering="crispEdges" stroke-width="1"/>
<rect x="456" y="359" width="3" height="5" fill="#000" stroke="none"/>
<path d="M546.5 181V241"/>
<rect x="545" y="240" width="1" height="1" fill="#000" stroke="none"/>
<path d="M538 240.5L546.5 255.5" shape-rendering="crispEdges" stroke-width="1"/>
<rect x="537.5" y="255.5" width="18" height="27"/>
<path d="M537 264.5H556"/>
<path d="M537 273.5H556"/>
<path d="M546.5 256V258.5H551.5V262.5H546.5V264"/>
<path d="M546.5 265V267.5H548.5L550.5 269.5L548.5 271.5H546.5V273" />
<path d="M542.5 275V282"/>
<rect x="541" y="275" width="1" height="1" fill="#000" stroke="none"/>
<rect x="541" y="281" width="1" height="1" fill="#000" stroke="none"/>
<path d="M551.5 275V281"/>
<rect x="547" y="278" width="2" height="2" fill="#000" stroke="none"/>
<rect x="549" y="277" width="1" height="1" fill="#000" stroke="none"/>
<rect x="549" y="280" width="2" height="1" fill="#000" stroke="none"/>
<rect x="550" y="276" width="1" height="1" fill="#000" stroke="none"/>
<path d="M546.5 282V342"/>
<path d="M546.5 344V347"/>
<path d="M546.5 350V353"/>
<path d="M546.5 356V359"/>
<path d="M546.5 362V365"/>
<path d="M546.5 368V371"/>
<path d="M541 350L551 356.5" shape-rendering="crispEdges" stroke-width="1"/>
<path d="M541 355L550 360.5" shape-rendering="crispEdges" stroke-width="1"/>
<rect x="550" y="359" width="3" height="5" fill="#000" stroke="none"/>
<path d="M639.5 181V241"/>
<rect x="638" y="240" width="1" height="1" fill="#000" stroke="none"/>
<path d="M631 240.5L639.5 255.5" shape-rendering="crispEdges" stroke-width="1"/>
<rect x="630.5" y="255.5" width="18" height="27"/>
<path d="M630 264.5H649"/>
<path d="M630 273.5H649"/>
<path d="M639.5 256V258.5H644.5V262.5H639.5V264"/>
<path d="M639.5 265V267.5H641.5L643.5 269.5L641.5 271.5H639.5V273" />
<path d="M635.5 275V282"/>
<rect x="634" y="275" width="1" height="1" fill="#000" stroke="none"/>
<rect x="634" y="281" width="1" height="1" fill="#000" stroke="none"/>
<path d="M644.5 275V281"/>
<rect x="640" y="278" width="2" height="2" fill="#000" stroke="none"/>
<rect x="642" y="277" width="1" height="1" fill="#000" stroke="none"/>
<rect x="642" y="280" width="2" height="1" fill="#000" stroke="none"/>
<rect x="643" y="276" width="1" height="1" fill="#000" stroke="none"/>
<path d="M639.5 282V342"/>
<path d="M639.5 344V347"/>
<path d="M639.5 350V353"/>
<path d="M639.5 356V359"/>
<path d="M639.5 362V365"/>
<path d="M639.5 368V371"/>
<path d="M634 350L644 356.5" shape-rendering="crispEdges" stroke-width="1"/>
<path d="M634 355L643 360.5" shape-rendering="crispEdges" stroke-width="1"/>
<rect x="643" y="359" width="3" height="5" fill="#000" stroke="none"/>
</g>
<path d="M397 233h3v1h-3zM396 234h1v1h-1zM400 234h1v1h-1zM400 235h2v1h-2zM395 236h7v1h-7zM395 237h1v5h-1zM402 237h1v5h-1zM398 237h1v3h-1zM399 239h1v1h-1z" fill="#000" shape-rendering="crispEdges"/>
<path d="M397 283h3v1h-3zM396 284h1v1h-1zM400 284h1v1h-1zM400 285h2v1h-2zM395 286h7v1h-7zM395 287h1v5h-1zM402 287h1v5h-1zM398 287h1v3h-1zM399 289h1v1h-1z" fill="#000" shape-rendering="crispEdges"/>
<path d="M490 283h3v1h-3zM489 284h1v1h-1zM493 284h1v1h-1zM493 285h2v1h-2zM488 286h7v1h-7zM488 287h1v5h-1zM495 287h1v5h-1zM491 287h1v3h-1zM492 289h1v1h-1z" fill="#000" shape-rendering="crispEdges"/>
<path d="M584 233h3v1h-3zM583 234h1v1h-1zM587 234h1v1h-1zM587 235h2v1h-2zM582 236h7v1h-7zM582 237h1v5h-1zM589 237h1v5h-1zM585 237h1v3h-1zM586 239h1v1h-1z" fill="#000" shape-rendering="crispEdges"/>
<path d="M584 283h3v1h-3zM583 284h1v1h-1zM587 284h1v1h-1zM587 285h2v1h-2zM582 286h7v1h-7zM582 287h1v5h-1zM589 287h1v5h-1zM585 287h1v3h-1zM586 289h1v1h-1z" fill="#000" shape-rendering="crispEdges"/>
<path d="M677 233h3v1h-3zM676 234h1v1h-1zM680 234h1v1h-1zM680 235h2v1h-2zM675 236h7v1h-7zM675 237h1v5h-1zM682 237h1v5h-1zM678 237h1v3h-1zM679 239h1v1h-1z" fill="#000" shape-rendering="crispEdges"/>
<path d="M677 283h3v1h-3zM676 284h1v1h-1zM680 284h1v1h-1zM680 285h2v1h-2zM675 286h7v1h-7zM675 287h1v5h-1zM682 287h1v5h-1zM678 287h1v3h-1zM679 289h1v1h-1z" fill="#000" shape-rendering="crispEdges"/>
<path d="M260 143H271L265.5 154Z" fill="#000"/>
<path d="M590 235h3v62h-89v-4h86z" fill="#000" shape-rendering="crispEdges"/>
<g font-family="Liberation Sans, sans-serif" font-size="9px" fill="#000" style="letter-spacing:0.05px">
<text x="247" y="132">QEG</text><text x="274.5" y="132">L9</text>
<text x="340.5" y="179">Icc (kA) 2, 73</text>
<text x="282" y="285">1</text>
<text x="376" y="285">2</text>
<text x="470" y="285">3</text>
<text x="563" y="285">4</text>
<text x="657" y="285">5</text>
</g>
</svg>
<div id="vsplit" class="abs"></div>
<div id="hsplit" class="abs"></div>
<div class="t lr" style="top:459px">Intervento magnetico di fase (A)</div>
<div class="t c" style="left:219px;top:457px">,0</div>
<div class="t c" style="left:313px;top:457px">144,0</div>
<div class="t c" style="left:407px;top:457px">54,0</div>
<div class="t c" style="left:501px;top:457px">144,0</div>
<div class="t c" style="left:595px;top:457px">90,0</div>
<div class="t lr g" style="top:478px">Potere di interruzione (kA)</div>
<div class="t c g" style="left:219px;top:476px">0</div>
<div class="t c g" style="left:313px;top:476px">4,5</div>
<div class="t c g" style="left:407px;top:476px">4,5</div>
<div class="t c g" style="left:501px;top:476px">4,5</div>
<div class="t c g" style="left:595px;top:476px">4,5</div>
<div class="t lr" style="top:497px">Tipo differenziale</div>
<div class="t c" style="left:219px;top:495px">-</div>
<div class="t c" style="left:313px;top:495px">&quot;AC&quot;</div>
<div class="t c" style="left:407px;top:495px">&quot;AC&quot;</div>
<div class="t c" style="left:501px;top:495px">&quot;AC&quot;</div>
<div class="t c" style="left:595px;top:495px">&quot;AC&quot;</div>
<div class="t lr g" style="top:516px">I diff. (A) / Rit.diff. (s)</div>
<div class="t c g" style="left:219px;top:514px"></div>
<div class="t c g" style="left:313px;top:514px">0,03(A)/0(s)</div>
<div class="t c g" style="left:407px;top:514px">0,03(A)/0(s)</div>
<div class="t c g" style="left:501px;top:514px">0,03(A)/0(s)</div>
<div class="t c g" style="left:595px;top:514px">0,03(A)/0(s)</div>
<div class="t lr" style="top:535px">Lunghezza linea a valle (m)</div>
<div class="t c" style="left:219px;top:533px">1,00</div>
<div class="t c" style="left:313px;top:533px">5,00</div>
<div class="t c" style="left:407px;top:533px">8,00</div>
<div class="t c" style="left:501px;top:533px">10,00</div>
<div class="t c" style="left:595px;top:533px">10,00</div>
<div class="t lr g" style="top:554px">Sezione di fase (mm²)</div>
<div class="t c g" style="left:219px;top:552px">4</div>
<div class="t c g" style="left:313px;top:552px">2,5</div>
<div class="t c g" style="left:407px;top:552px">2,5</div>
<div class="t c g" style="left:501px;top:552px">2,5</div>
<div class="t c g" style="left:595px;top:552px">1,5</div>
<div class="t lr" style="top:573px">Sezione di neutro (mm²)</div>
<div class="t c" style="left:219px;top:571px">4</div>
<div class="t c" style="left:313px;top:571px">2,5</div>
<div class="t c" style="left:407px;top:571px">2,5</div>
<div class="t c" style="left:501px;top:571px">2,5</div>
<div class="t c" style="left:595px;top:571px">1,5</div>
<div class="t lr g" style="top:592px">Sezione di PE (mm²)</div>
<div class="t c g" style="left:219px;top:590px">4</div>
<div class="t c g" style="left:313px;top:590px">2,5</div>
<div class="t c g" style="left:407px;top:590px">2,5</div>
<div class="t c g" style="left:501px;top:590px">2,5</div>
<div class="t c g" style="left:595px;top:590px">1,5</div>
<div class="t lr" style="top:611px">Portata cavo di fase (A)</div>
<div class="t c" style="left:219px;top:609px">28,00</div>
<div class="t c" style="left:313px;top:609px">19,00</div>
<div class="t c" style="left:407px;top:609px">15,00</div>
<div class="t c" style="left:501px;top:609px">17,00</div>
<div class="t c" style="left:595px;top:609px">14,00</div>
<div class="t lr g foc" style="top:630px">c.d.t. effett. tratto/impianto (%)</div>
<div class="t c g" style="left:219px;top:628px">0,03 / 0,29</div>
<div class="t c g" style="left:313px;top:628px">0,10 / 0,39</div>
<div class="t c g" style="left:407px;top:628px">0,14 / 0,43</div>
<div class="t c g" style="left:501px;top:628px">0,29 / 0,58</div>
<div class="t c g" style="left:595px;top:628px">0,29 / 0,58</div>
<div class="t lr" style="top:649px">Tipo di cavo</div>
<div class="t c" style="left:219px;top:647px">Unipolare sen...</div>
<div class="t c" style="left:313px;top:647px">Unipolare sen...</div>
<div class="t c" style="left:407px;top:647px">Unipolare sen...</div>
<div class="t c" style="left:501px;top:647px">Unipolare sen...</div>
<div class="t c" style="left:595px;top:647px">Unipolare sen...</div>
<div class="t lr g" style="top:668px">Sigla cavo</div>
<div class="t c g" style="left:219px;top:666px"></div>
<div class="t c g" style="left:313px;top:666px">N07V-K</div>
<div class="t c g" style="left:407px;top:666px">N07V-K</div>
<div class="t c g" style="left:501px;top:666px">N07V-K</div>
<div class="t c g" style="left:595px;top:666px">N07V-K</div>
<div class="t lr" style="top:687px">Tipo di posa</div>
<div class="t c" style="left:219px;top:685px">5</div>
<div class="t c" style="left:313px;top:685px">5</div>
<div class="t c" style="left:407px;top:685px">5</div>
<div class="t c" style="left:501px;top:685px">5</div>
<div class="t c" style="left:595px;top:685px">5</div>
<svg class="abs" style="left:0;top:590px" width="816" height="100" viewBox="0 590 816 100">
<path d="M-13.5 631.2L-12.7 631.0L-11.8 630.8L-10.8 630.6L-9.6 630.4L-8.1 630.1L-5.9 629.8L-3.2 629.4L0.4 628.9L4.9 628.2L10.3 627.5L16.4 626.7L23.1 625.8L30.0 624.9L36.9 624.0L43.8 623.1L50.3 622.3L56.5 621.5L62.8 620.8L69.0 620.1L75.3 619.4L81.5 618.6L87.8 617.9L94.0 617.3L100.2 616.6L106.5 615.9L112.6 615.3L118.8 614.6L125.0 614.0L131.2 613.4L137.4 612.8L143.8 612.2L150.2 611.7L156.8 611.2L163.5 610.7L170.3 610.2L177.1 609.7L184.0 609.3L190.8 608.8L197.5 608.5L204.1 608.1L210.6 607.8L217.1 607.5L223.4 607.3L229.8 607.1L236.1 606.9L242.4 606.7L248.7 606.6L255.1 606.4L261.5 606.2L267.8 606.0L274.2 605.9L280.6 605.7L286.9 605.6L293.3 605.4L299.7 605.3L306.0 605.2L312.4 605.1L318.8 605.0L325.2 605.0L331.5 604.9L337.9 604.9L344.3 604.8L350.6 604.8L357.0 604.8L363.4 604.8L369.7 604.8L376.1 604.9L382.5 604.9L388.8 605.0L395.2 605.1L401.6 605.1L408.0 605.2L414.3 605.3L420.7 605.3L427.1 605.4L433.5 605.5L439.8 605.6L446.2 605.7L452.6 605.8L458.9 605.9L465.3 606.0L471.7 606.2L478.1 606.3L484.4 606.5L490.8 606.7L497.2 606.9L503.5 607.1L509.9 607.3L516.3 607.5L522.7 607.7L529.0 608.0L535.4 608.2L541.8 608.5L548.1 608.8L554.5 609.1L560.9 609.4L567.4 609.8L574.1 610.2L581.0 610.6L587.8 611.0L594.4 611.5L600.7 611.9L606.5 612.3L611.8 612.7L616.4 613.0L620.6 613.3L624.2 613.6L627.6 613.9L630.7 614.2L633.7 614.4L636.7 614.7L639.7 615.0L642.7 615.3L645.3 615.5L647.8 615.8L650.1 616.0L652.6 616.3L655.3 616.6L658.2 617.0L661.7 617.4L665.7 617.9L670.2 618.5L675.1 619.1L680.2 619.8L685.3 620.5L690.2 621.2L694.7 621.8L698.6 622.4L702.0 622.9L705.0 623.3L707.8 623.7L710.3 624.1L712.6 624.5L714.9 624.9L717.2 625.3L719.6 625.7L722.0 626.1L724.4 626.5L726.7 626.8L729.0 627.2L731.2 627.6L733.3 628.0L735.4 628.4L737.4 628.8L739.4 629.3L741.3 629.7L743.1 630.2L744.8 630.6L746.5 631.1L748.1 631.6L749.6 632.0L751.1 632.5L752.5 633.1L753.8 633.6L755.0 634.1L756.2 634.7L757.3 635.2L758.3 635.7L759.2 636.3L760.0 636.8L760.7 637.3L761.4 637.9L761.9 638.4L762.4 638.9L762.7 639.3L762.9 639.5L762.9 639.6L762.9 639.6L762.9 639.5L762.9 639.7L762.7 639.9L762.4 640.3L761.9 640.7L761.4 641.2L760.7 641.7L760.0 642.3L759.2 642.8L758.3 643.3L757.3 643.8L756.3 644.3L755.1 644.8L753.9 645.3L752.5 645.8L751.2 646.2L749.8 646.7L748.3 647.0L746.7 647.4L745.0 647.8L743.2 648.2L741.3 648.6L739.4 648.9L737.4 649.4L735.4 649.8L733.3 650.2L731.1 650.7L728.9 651.1L726.6 651.6L724.3 652.1L721.9 652.5L719.5 652.9L717.1 653.4L714.9 653.8L712.6 654.2L710.2 654.6L707.8 655.0L705.0 655.4L702.0 655.9L698.6 656.3L694.7 656.8L690.2 657.4L685.3 658.0L680.2 658.6L675.2 659.2L670.3 659.7L665.7 660.3L661.7 660.7L658.3 661.1L655.3 661.4L652.6 661.7L650.2 662.0L647.8 662.2L645.3 662.5L642.7 662.7L639.7 663.0L636.7 663.3L633.7 663.7L630.7 664.0L627.5 664.3L624.2 664.7L620.5 665.0L616.4 665.4L611.8 665.7L606.5 666.1L600.7 666.4L594.4 666.8L587.8 667.2L581.0 667.6L574.1 667.9L567.4 668.3L560.9 668.6L554.5 668.9L548.1 669.2L541.8 669.5L535.4 669.8L529.0 670.0L522.6 670.3L516.3 670.6L509.9 670.8L503.5 671.0L497.2 671.3L490.8 671.5L484.4 671.7L478.0 672.0L471.7 672.2L465.3 672.3L458.9 672.5L452.6 672.6L446.2 672.8L439.8 672.9L433.5 673.0L427.1 673.1L420.7 673.1L414.3 673.2L408.0 673.3L401.6 673.4L395.2 673.4L388.8 673.5L382.5 673.6L376.1 673.6L369.7 673.7L363.4 673.7L357.0 673.7L350.6 673.7L344.3 673.7L337.9 673.6L331.5 673.6L325.2 673.5L318.8 673.5L312.4 673.4L306.0 673.3L299.7 673.2L293.3 673.1L286.9 672.9L280.6 672.8L274.2 672.6L267.8 672.4L261.4 672.3L255.1 672.1L248.7 671.9L242.4 671.8L236.1 671.6L229.8 671.5L223.4 671.3L217.1 671.1L210.6 670.9L204.1 670.6L197.5 670.3L190.8 670.0L183.9 669.6L177.1 669.2L170.3 668.8L163.5 668.4L156.8 667.9L150.2 667.5L143.7 667.1L137.4 666.6L131.2 666.2L125.0 665.7L118.8 665.2L112.6 664.7L106.5 664.1L100.3 663.5L94.0 662.9L87.8 662.3L81.6 661.6L75.3 660.9L69.1 660.1L62.8 659.4L56.6 658.5L50.3 657.7L43.9 656.7L37.0 655.6L30.0 654.4L23.1 653.2L16.5 652.0L10.3 650.9L4.9 649.9L0.3 649.1L-3.3 648.5L-6.1 648.0L-8.2 647.6L-9.8 647.3L-11.0 647.0L-12.0 646.8L-12.8 646.7L-13.7 646.5L-14.3 649.9L-13.5 650.0L-12.6 650.2L-11.7 650.4L-10.4 650.6L-8.8 650.9L-6.7 651.3L-3.9 651.8L-0.3 652.5L4.2 653.4L9.6 654.4L15.8 655.7L22.4 657.0L29.3 658.3L36.3 659.6L43.2 660.8L49.7 661.9L55.9 663.0L62.2 663.9L68.4 664.8L74.7 665.7L80.9 666.6L87.2 667.4L93.5 668.2L99.7 668.9L106.0 669.5L112.2 670.1L118.4 670.6L124.5 671.1L130.8 671.6L137.0 672.0L143.4 672.5L149.8 672.9L156.4 673.3L163.1 673.8L169.9 674.2L176.8 674.6L183.6 675.0L190.5 675.4L197.2 675.7L203.9 676.0L210.4 676.3L216.9 676.5L223.3 676.7L229.6 676.9L235.9 677.0L242.3 677.2L248.6 677.3L254.9 677.5L261.3 677.7L267.7 677.8L274.1 678.0L280.4 678.2L286.8 678.3L293.2 678.5L299.6 678.6L306.0 678.7L312.3 678.8L318.7 678.9L325.1 678.9L331.5 679.0L337.9 679.0L344.2 679.1L350.6 679.1L357.0 679.1L363.4 679.1L369.8 679.1L376.1 679.0L382.5 679.0L388.9 678.9L395.3 678.8L401.7 678.8L408.0 678.7L414.4 678.6L420.8 678.5L427.2 678.5L433.5 678.4L439.9 678.3L446.3 678.2L452.7 678.0L459.1 677.9L465.4 677.7L471.8 677.5L478.2 677.3L484.6 677.1L491.0 676.9L497.3 676.7L503.7 676.4L510.1 676.2L516.5 676.0L522.9 675.7L529.2 675.4L535.6 675.2L542.0 674.9L548.4 674.6L554.8 674.3L561.1 674.0L567.7 673.7L574.4 673.3L581.3 673.0L588.1 672.6L594.7 672.2L601.0 671.8L606.9 671.5L612.2 671.1L616.9 670.7L621.0 670.4L624.7 670.0L628.1 669.7L631.2 669.4L634.3 669.0L637.2 668.7L640.3 668.4L643.2 668.1L645.8 667.8L648.3 667.6L650.7 667.3L653.2 667.1L655.9 666.8L658.9 666.5L662.3 666.1L666.3 665.6L670.9 665.1L675.8 664.5L680.9 664.0L686.0 663.3L690.9 662.8L695.4 662.2L699.4 661.7L702.8 661.2L705.8 660.8L708.6 660.3L711.1 659.9L713.5 659.5L715.8 659.1L718.1 658.7L720.5 658.3L722.9 657.8L725.3 657.4L727.7 656.9L730.0 656.4L732.2 656.0L734.4 655.5L736.5 655.1L738.6 654.6L740.5 654.2L742.4 653.8L744.3 653.5L746.1 653.1L747.9 652.7L749.6 652.3L751.2 651.8L752.8 651.4L754.3 650.9L755.8 650.3L757.2 649.8L758.5 649.2L759.7 648.6L760.9 648.0L762.0 647.4L763.0 646.7L763.9 646.1L764.8 645.4L765.6 644.7L766.4 643.9L767.1 643.0L767.7 642.0L768.1 640.9L768.3 639.6L768.1 638.3L767.7 637.2L767.1 636.2L766.4 635.3L765.7 634.5L764.8 633.8L764.0 633.1L763.0 632.4L762.0 631.7L761.0 631.1L759.8 630.4L758.5 629.8L757.2 629.2L755.9 628.6L754.4 628.0L752.9 627.5L751.3 626.9L749.7 626.4L748.0 625.9L746.2 625.4L744.4 624.9L742.5 624.5L740.6 624.0L738.6 623.6L736.5 623.1L734.4 622.7L732.2 622.3L729.9 621.9L727.6 621.5L725.2 621.1L722.9 620.7L720.4 620.3L718.1 619.9L715.8 619.6L713.5 619.2L711.1 618.8L708.6 618.4L705.8 618.0L702.8 617.5L699.4 617.0L695.4 616.5L690.9 615.8L686.0 615.2L680.9 614.5L675.8 613.8L670.9 613.1L666.4 612.5L662.3 612.0L658.9 611.6L655.9 611.2L653.2 610.9L650.7 610.6L648.3 610.4L645.8 610.1L643.2 609.9L640.3 609.6L637.2 609.3L634.2 609.1L631.2 608.8L628.0 608.5L624.7 608.2L621.0 608.0L616.8 607.6L612.2 607.3L606.9 606.9L601.1 606.5L594.7 606.1L588.1 605.6L581.3 605.2L574.5 604.8L567.7 604.4L561.1 604.0L554.8 603.7L548.4 603.4L542.0 603.1L535.6 602.8L529.2 602.6L522.8 602.3L516.5 602.1L510.1 601.9L503.7 601.7L497.3 601.5L491.0 601.3L484.6 601.1L478.2 600.9L471.8 600.8L465.4 600.6L459.1 600.5L452.7 600.4L446.3 600.3L439.9 600.2L433.5 600.1L427.2 600.0L420.8 599.9L414.4 599.9L408.0 599.8L401.7 599.7L395.3 599.7L388.9 599.6L382.5 599.5L376.1 599.5L369.8 599.4L363.4 599.4L357.0 599.4L350.6 599.4L344.2 599.4L337.9 599.5L331.5 599.5L325.1 599.6L318.7 599.6L312.3 599.7L306.0 599.8L299.6 599.9L293.2 600.0L286.8 600.2L280.4 600.3L274.1 600.5L267.7 600.6L261.3 600.8L254.9 601.0L248.6 601.2L242.2 601.4L235.9 601.6L229.6 601.9L223.2 602.1L216.9 602.4L210.4 602.7L203.9 603.1L197.2 603.5L190.5 603.9L183.6 604.4L176.8 604.9L169.9 605.4L163.1 606.0L156.4 606.5L149.8 607.1L143.4 607.7L137.0 608.2L130.7 608.8L124.5 609.4L118.3 610.1L112.2 610.7L106.0 611.4L99.8 612.0L93.5 612.7L87.2 613.4L81.0 614.1L74.7 614.8L68.5 615.5L62.2 616.2L56.0 617.0L49.7 617.7L43.2 618.4L36.4 619.2L29.4 620.0L22.4 620.8L15.8 621.6L9.6 622.3L4.2 623.0L-0.4 623.5L-3.9 624.0L-6.8 624.4L-9.0 624.8L-10.6 625.1L-11.9 625.3L-12.9 625.5L-13.7 625.7L-14.5 625.8Z" fill="#000" stroke="#000" stroke-width="0.3" stroke-linejoin="round"/>
</svg>
<div id="status" class="abs">
<div style="left:-1px;width:72px">07/02/2012</div>
<div style="left:73px;width:39px">10:24</div>
<div style="left:115px;width:204px">Modalità: Progettazione</div>
<div style="left:321px;width:500px">Può essere attivato l'inserimento dei dati e il calcolo dei circuiti in modalità progettazione</div>
</div>
</div>
</body>
</html>
